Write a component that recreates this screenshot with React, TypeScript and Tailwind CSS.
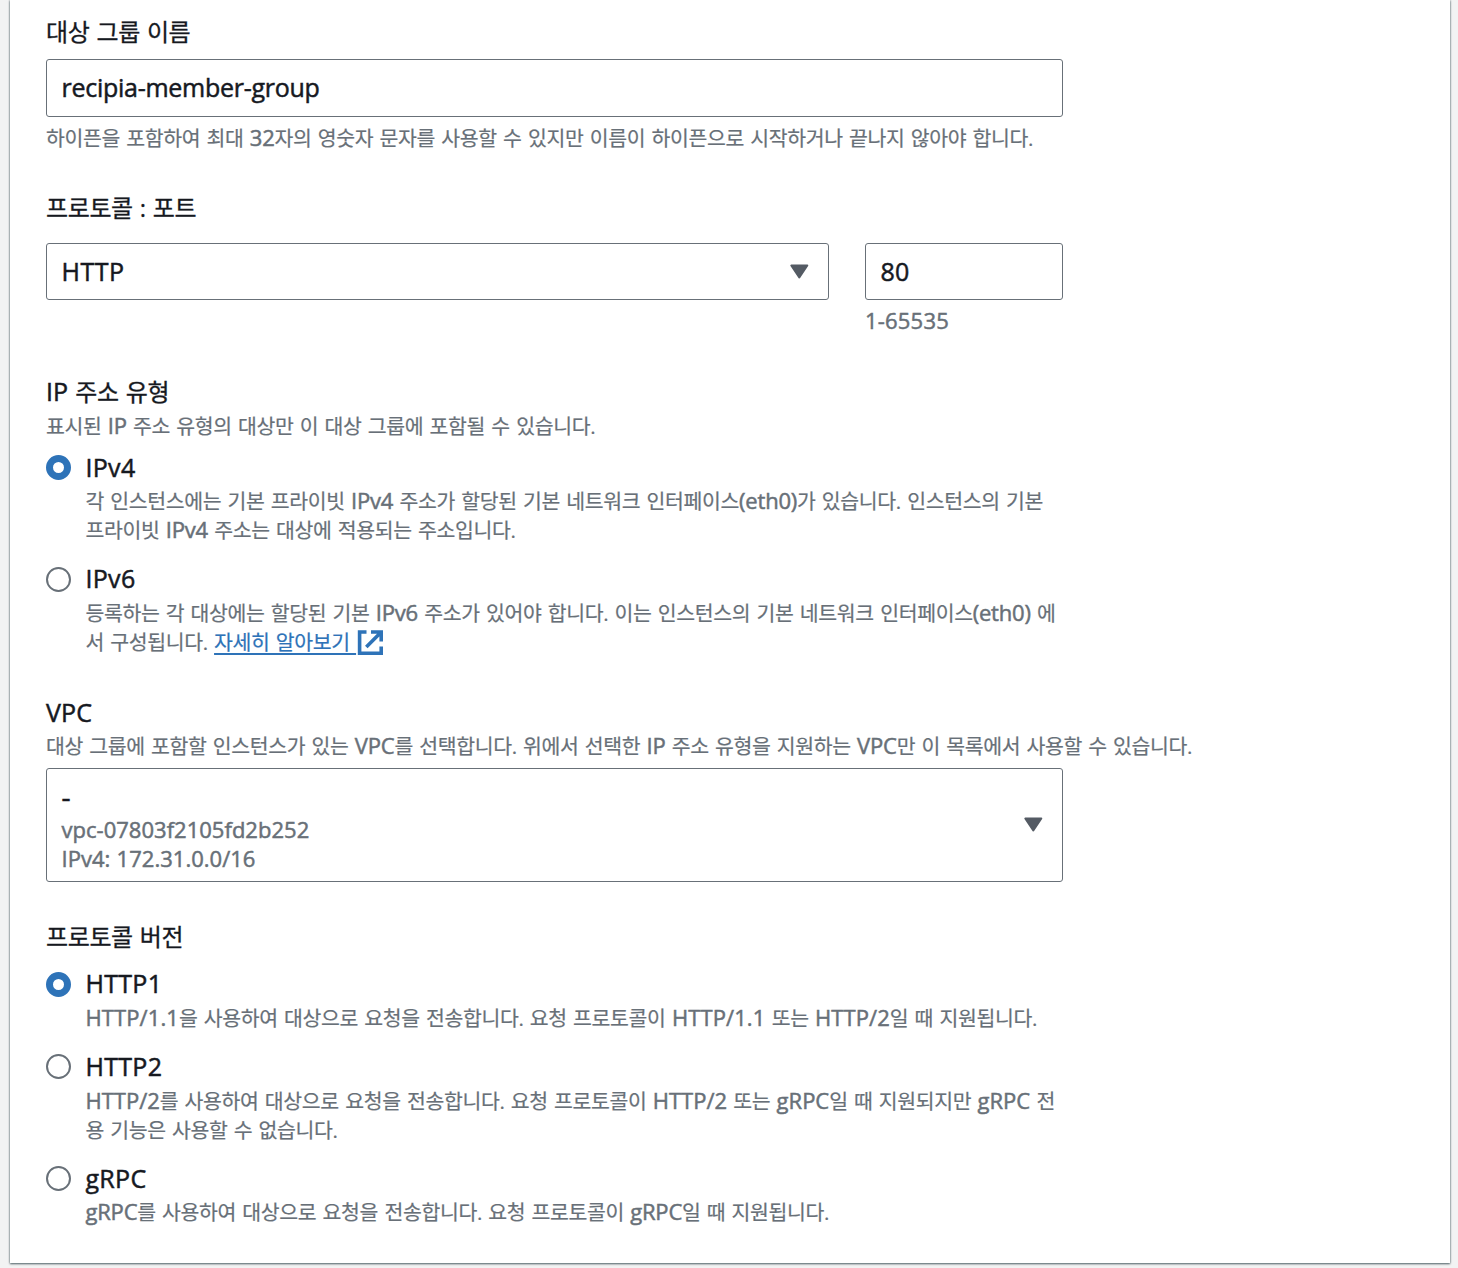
import type { ReactNode } from "react";

/* Splits a string so Latin runs and Hangul runs each get their own type size. */
function Mixed({ text, latin }: { text: string; latin: string }) {
  return (
    <>
      {text.split(/([A-Za-z0-9/().:-]*[A-Za-z0-9(-][A-Za-z0-9/().:-]*)/).map((run, i) =>
        i % 2 ? (
          <span key={i} className={latin}>
            {run}
          </span>
        ) : (
          run
        ),
      )}
    </>
  );
}

function Title({
  children,
  className = "leading-[28px]",
  latin = "text-[25px] tracking-[0.1px] [-webkit-text-stroke:0.5px]",
}: {
  children: string;
  className?: string;
  latin?: string;
}) {
  return (
    <div
      className={`h-[30px] text-[24px] tracking-[-0.38px] [word-spacing:1.2px] whitespace-nowrap text-[#16191f] [-webkit-text-stroke:0.3px] ${className}`}
    >
      <Mixed text={children} latin={latin} />
    </div>
  );
}

function Note({
  children,
  className = "",
  latin = "text-[22px] tracking-[-0.2px] [-webkit-text-stroke:0.5px]",
  extra,
}: {
  children: string;
  className?: string;
  latin?: string;
  extra?: ReactNode;
}) {
  return (
    <div
      className={`flex h-[29px] text-[20.5px] leading-[28px] tracking-[-0.36px] [word-spacing:1.3px] whitespace-pre text-[#687078] [-webkit-text-stroke:0.2px] ${className}`}
    >
      <span>
        <Mixed text={children} latin={latin} />
      </span>
      {extra}
    </div>
  );
}

function Caret() {
  return (
    <svg width="20" height="16" viewBox="0 0 20 16" className="shrink-0" fill="#545b64" stroke="#545b64" strokeWidth="2" strokeLinejoin="round">
      <path d="M2.3 1.5H18.3L10.3 13.5Z" />
    </svg>
  );
}

function Radio({ checked = false }: { checked?: boolean }) {
  return checked ? (
    <span className="mt-[2px] h-[25px] w-[25px] shrink-0 rounded-full border-[7.5px] border-[#2e73b8] bg-white" />
  ) : (
    <span className="mt-[2px] h-[25px] w-[25px] shrink-0 rounded-full border-2 border-[#687078] bg-white" />
  );
}

function Option({
  checked,
  label,
  labelClass = "leading-[28px]",
  bodyClass = "mt-[3px] mb-px",
  className = "",
  children,
}: {
  checked?: boolean;
  label: string;
  labelClass?: string;
  bodyClass?: string;
  className?: string;
  children: ReactNode;
}) {
  return (
    <div className={`flex gap-[14.5px] ${className}`}>
      <Radio checked={checked} />
      <div>
        <Title className={labelClass} latin="text-[25px] tracking-[0.3px] [-webkit-text-stroke:0.5px]">
          {label}
        </Title>
        <div className={bodyClass}>{children}</div>
      </div>
    </div>
  );
}

const field = "flex items-center rounded-[3px] border border-[#687078] bg-white";
const wideLatin = "text-[22px] tracking-[0.1px] [-webkit-text-stroke:0.5px]";

export default function App() {
  return (
    <div className="h-[1268px] w-[1458px] overflow-hidden bg-[#f2f3f3] pr-[8px] pl-[10px] font-['Open_Sans','Noto_Sans_CJK_KR',sans-serif]">
      <div className="h-[1263px] bg-white pt-[17px] pl-[36px] shadow-[0_1px_2px_0_rgba(0,28,36,0.6),0_0_2px_0_rgba(0,28,36,0.4)]">
        <Title className="leading-[30px]">대상 그룹 이름</Title>
        <div className={`${field} mt-[12px] h-[58px] w-[1017px] pl-[14.5px]`}>
          <Title className="leading-[28px]" latin="text-[25px] tracking-[-0.27px] [-webkit-text-stroke:0.5px]">
            recipia-member-group
          </Title>
        </div>
        <Note className="mt-[6px]">하이픈을 포함하여 최대 32자의 영숫자 문자를 사용할 수 있지만 이름이 하이픈으로 시작하거나 끝나지 않아야 합니다.</Note>

        <Title className="mt-[41px] leading-[30px]">프로토콜 : 포트</Title>
        <div className="mt-[20px] flex gap-[36px]">
          <div className={`${field} h-[57px] w-[783px] justify-between pr-[19px] pl-[14.5px]`}>
            <Title latin="text-[25px] tracking-[0.5px] [-webkit-text-stroke:0.5px]">HTTP</Title>
            <Caret />
          </div>
          <div>
            <div className={`${field} h-[57px] w-[198px] pl-[14.5px]`}>
              <Title>80</Title>
            </div>
            <Note className="mt-[6px] mb-px" latin="text-[22px] tracking-[0.2px] [-webkit-text-stroke:0.5px]">
              1-65535
            </Note>
          </div>
        </div>

        <Title className="mt-[40px] leading-[30px]">IP 주소 유형</Title>
        <Note className="mt-[5px]">표시된 IP 주소 유형의 대상만 이 대상 그룹에 포함될 수 있습니다.</Note>
        <Option checked label="IPv4" className="mt-[13px]">
          <Note>각 인스턴스에는 기본 프라이빗 IPv4 주소가 할당된 기본 네트워크 인터페이스(eth0)가 있습니다. 인스턴스의 기본</Note>
          <Note>프라이빗 IPv4 주소는 대상에 적용되는 주소입니다.</Note>
        </Option>
        <Option label="IPv6" labelClass="leading-[26px]" bodyClass="mt-[3px]" className="mt-[20px]">
          <Note>등록하는 각 대상에는 할당된 기본 IPv6 주소가 있어야 합니다. 이는 인스턴스의 기본 네트워크 인터페이스(eth0) 에</Note>
          <Note
            className="mt-px"
            extra={
              <a className="flex text-[#2e73b8]">
                <span className="underline decoration-2 underline-offset-3">자세히 알아보기 </span>
                <svg width="26" height="26" viewBox="0 0 26 26" className="mt-[2px] ml-px" fill="none" stroke="#2e73b8" strokeWidth="3.6">
                  <path d="M9.5 2H2.6V23.2H24.2V16.5M14 2H24.2V11.5M23.5 2.7L9.3 17" />
                </svg>
              </a>
            }
          >
            {"서 구성됩니다. "}
          </Note>
        </Option>

        <Title className="mt-[40px] leading-[30px]">VPC</Title>
        <Note className="mt-[4px]">대상 그룹에 포함할 인스턴스가 있는 VPC를 선택합니다. 위에서 선택한 IP 주소 유형을 지원하는 VPC만 이 목록에서 사용할 수 있습니다.</Note>
        <div className={`${field} mt-[8px] h-[114px] w-[1017px] justify-between pr-[19px] pl-[14.5px]`}>
          <div>
            <Title className="mt-[6px] leading-[26px]" latin="text-[28px] [-webkit-text-stroke:0.6px]">
              -
            </Title>
            <Note className="mt-[2px]" latin="text-[22px] tracking-[0.02px] [-webkit-text-stroke:0.5px]">
              vpc-07803f2105fd2b252
            </Note>
            <Note latin="text-[22px] tracking-[0.02px] [-webkit-text-stroke:0.5px]">IPv4: 172.31.0.0/16</Note>
          </div>
          <Caret />
        </div>

        <Title className="mt-[40px] leading-[30px]">프로토콜 버전</Title>
        <Option checked label="HTTP1" labelClass="leading-[26px]" className="mt-[18px]">
          <Note latin={wideLatin}>HTTP/1.1을 사용하여 대상으로 요청을 전송합니다. 요청 프로토콜이 HTTP/1.1 또는 HTTP/2일 때 지원됩니다.</Note>
        </Option>
        <Option label="HTTP2" bodyClass="mt-[4px]" className="mt-[19px]">
          <Note latin="text-[22px] tracking-[0px] [-webkit-text-stroke:0.5px]">
            HTTP/2를 사용하여 대상으로 요청을 전송합니다. 요청 프로토콜이 HTTP/2 또는 gRPC일 때 지원되지만 gRPC 전
          </Note>
          <Note className="mt-px">용 기능은 사용할 수 없습니다.</Note>
        </Option>
        <Option label="gRPC" className="mt-[19px]">
          <Note>gRPC를 사용하여 대상으로 요청을 전송합니다. 요청 프로토콜이 gRPC일 때 지원됩니다.</Note>
        </Option>
      </div>
    </div>
  );
}
